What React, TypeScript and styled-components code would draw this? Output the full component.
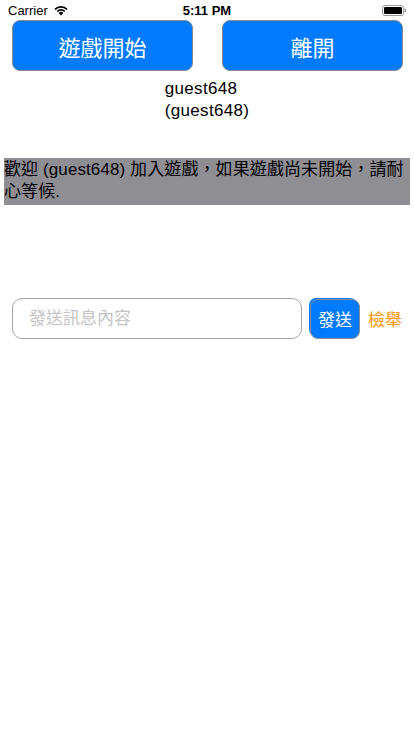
import React from 'react';
import styled, { createGlobalStyle } from 'styled-components';

const GlobalStyle = createGlobalStyle`
  html, body {
    margin: 0;
    padding: 0;
    background: #ffffff;
  }
  body {
    font-family: "Liberation Sans", "Noto Sans CJK TC", sans-serif;
    color: #000;
  }
`;

const App = () => {
  return (
    <Screen>
      <GlobalStyle />
      <StatusBar>
        <Carrier>
          Carrier
          <svg width="16" height="12" viewBox="0 0 16 12">
            <path d="M8 11.5 L5.6 8.9 A3.4 3.4 0 0 1 10.4 8.9 Z" fill="#000" />
            <path d="M3.6 6.9 A6.2 6.2 0 0 1 12.4 6.9 L11.2 8.1 A4.5 4.5 0 0 0 4.8 8.1 Z" fill="#000" />
            <path d="M1.4 4.7 A9.3 9.3 0 0 1 14.6 4.7 L13.4 5.9 A7.6 7.6 0 0 0 2.6 5.9 Z" fill="#000" />
          </svg>
        </Carrier>
        <Clock>5:11 PM</Clock>
        <Battery>
          <svg width="24" height="11" viewBox="0 0 24 11">
            <rect x="0.5" y="0.5" width="21" height="10" rx="2.5" fill="none" stroke="#999" />
            <rect x="2" y="2" width="18" height="7" rx="1.2" fill="#000" />
            <rect x="22.5" y="3.5" width="1.5" height="4" rx="0.7" fill="#999" />
          </svg>
        </Battery>
      </StatusBar>

      <TopButtons>
        <BigButton>遊戲開始</BigButton>
        <BigButton>離開</BigButton>
      </TopButtons>

      <PlayerName>
        guest648
        <br />
        (guest648)
      </PlayerName>

      <Banner>歡迎 (guest648) 加入遊戲，如果遊戲尚未開始，請耐心等候.</Banner>

      <ChatRow>
        <MessageInput placeholder="發送訊息內容" />
        <SendButton>發送</SendButton>
        <ReportLink>檢舉</ReportLink>
      </ChatRow>
    </Screen>
  );
};

export default App;

const Screen = styled.div`
  width: 414px;
  height: 736px;
  background: #fff;
  overflow: hidden;
`;

const StatusBar = styled.div`
  height: 20px;
  display: flex;
  align-items: center;
  justify-content: space-between;
  position: relative;
  padding: 0 8px;
  font-size: 13px;
`;

const Carrier = styled.div`
  display: flex;
  align-items: center;
  gap: 5px;
  svg {
    margin-top: -1px;
  }
`;

const Clock = styled.div`
  position: absolute;
  left: 0;
  right: 0;
  text-align: center;
  font-weight: bold;
  pointer-events: none;
`;

const Battery = styled.div`
  display: flex;
  align-items: center;
`;

const TopButtons = styled.div`
  display: flex;
  justify-content: space-between;
  padding: 0 11px 0 12px;
`;

const BigButton = styled.button`
  width: 181px;
  height: 51px;
  background: #007aff;
  color: #fff;
  border: 1px solid #8a8a8a;
  border-radius: 8px;
  font-family: "Liberation Sans", "Noto Sans CJK TC", sans-serif;
  font-size: 22px;
  padding: 0;
  cursor: pointer;
`;

const PlayerName = styled.div`
  width: max-content;
  margin: 7px auto 0;
  font-size: 17px;
  line-height: 22px;
  letter-spacing: 0.3px;
  text-align: left;
`;

const Banner = styled.div`
  margin: 36px 4px 0;
  background: #8e8e93;
  font-size: 17px;
  line-height: 22px;
  padding: 1px 0 2px;
  letter-spacing: 0.1px;
`;

const ChatRow = styled.div`
  display: flex;
  align-items: center;
  margin-top: 93px;
  padding: 0 12px;
`;

const MessageInput = styled.input`
  width: 290px;
  height: 41px;
  box-sizing: border-box;
  border: 1px solid #a8a8a8;
  border-radius: 10px;
  padding: 0 16px;
  font-family: "Liberation Sans", "Noto Sans CJK TC", sans-serif;
  font-size: 17px;
  outline: none;
  &::placeholder {
    color: #c4c4c6;
  }
`;

const SendButton = styled.button`
  margin-left: 8px;
  width: 50px;
  height: 40px;
  background: #007aff;
  color: #fff;
  border: 1px solid #8a8a8a;
  border-radius: 8px;
  font-family: "Liberation Sans", "Noto Sans CJK TC", sans-serif;
  font-size: 17px;
  padding: 0;
  box-shadow: -2px -2px 0 -1px #007aff;
`;

const ReportLink = styled.span`
  margin-left: 8px;
  color: #ff9500;
  font-size: 17px;
`;
